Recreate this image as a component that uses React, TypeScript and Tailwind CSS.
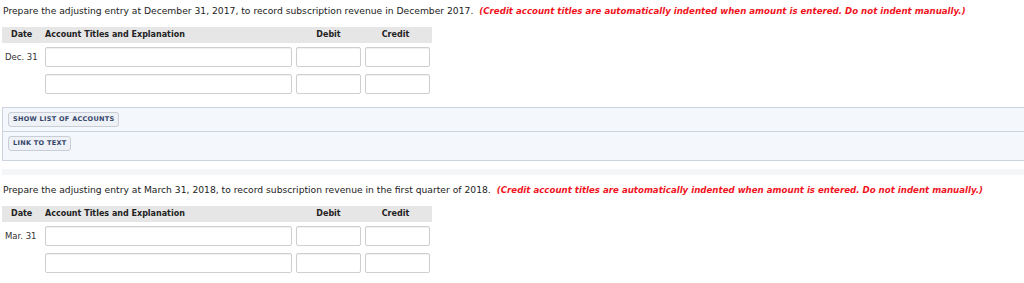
import React from "react";

const font = { fontFamily: '"DejaVu Sans", Verdana, sans-serif' };

function Field({ w }: { w: string }) {
  return <div className={`${w} h-[20px] border border-[#cfcfcf] rounded-[2px] bg-white shadow-[inset_0_1px_1px_rgba(0,0,0,0.06)]`} />;
}

function Entry({ date }: { date: string }) {
  return (
    <div className="ml-[2px] w-[430px]">
      <div className="flex h-[16px] items-center bg-[#e6e6e6] text-[8px] font-bold text-[#222]">
        <div className="w-[43px] pl-[9px]">Date</div>
        <div className="w-[251px]">Account Titles and Explanation</div>
        <div className="w-[65px] text-center">Debit</div>
        <div className="w-[69px] text-center">Credit</div>
      </div>
      <div className="mt-[4px] flex items-center">
        <div className="w-[43px] pl-[3px] text-[8.5px] text-[#333]">{date}</div>
        <Field w="w-[247px]" />
        <div className="w-[4px]" />
        <Field w="w-[65px]" />
        <div className="w-[4px]" />
        <Field w="w-[65px]" />
      </div>
      <div className="mt-[7px] flex items-center">
        <div className="w-[43px]" />
        <Field w="w-[247px]" />
        <div className="w-[4px]" />
        <Field w="w-[65px]" />
        <div className="w-[4px]" />
        <Field w="w-[65px]" />
      </div>
    </div>
  );
}

function Intro({ text }: { text: string }) {
  return (
    <div className="flex items-center h-[12px] pl-[3px] text-[9.2px] text-[#222] whitespace-nowrap">
      <span>{text}</span>
      <span className="ml-[6px] text-[8.65px] font-bold italic text-[#f0141e]">
        (Credit account titles are automatically indented when amount is entered. Do not indent manually.)
      </span>
    </div>
  );
}

function Btn({ label }: { label: string }) {
  return (
    <div className="flex h-[15px] items-center rounded-[3px] border border-[#c9ced6] bg-[#eef1f5] px-[4px] text-[6.5px] leading-none font-bold tracking-[0.3px] text-[#34456a]">
      {label}
    </div>
  );
}

export default function App() {
  return (
    <div className="w-[1024px] h-[283px] overflow-hidden bg-white" style={font}>
      <div className="pt-[5px]">
        <Intro text="Prepare the adjusting entry at December 31, 2017, to record subscription revenue in December 2017." />
      </div>
      <div className="mt-[10px]">
        <Entry date="Dec. 31" />
      </div>
      <div className="ml-[2px] mt-[13px] w-[1030px] border border-[#cdd4de] bg-[#f4f7fb]">
        <div className="flex h-[23px] items-start pl-[5px] pt-[4px]">
          <Btn label="SHOW LIST OF ACCOUNTS" />
        </div>
        <div className="flex h-[29px] items-start border-t border-[#cdd4de] pl-[5px] pt-[4px]">
          <Btn label="LINK TO TEXT" />
        </div>
      </div>
      <div className="mt-[8px] ml-[2px] h-[6px] bg-[#f5f6f8]" />
      <div className="pt-[9px]">
        <Intro text="Prepare the adjusting entry at March 31, 2018, to record subscription revenue in the first quarter of 2018." />
      </div>
      <div className="mt-[10px]">
        <Entry date="Mar. 31" />
      </div>
    </div>
  );
}
